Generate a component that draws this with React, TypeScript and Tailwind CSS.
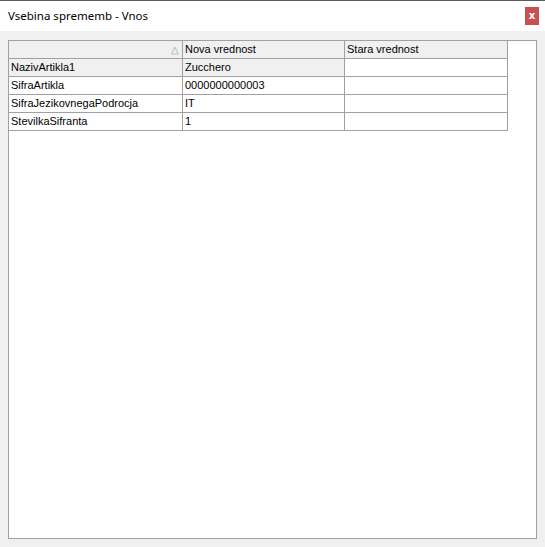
const rows = [
  { name: 'NazivArtikla1', nova: 'Zucchero', stara: '', current: true },
  { name: 'SifraArtikla', nova: '0000000000003', stara: '' },
  { name: 'SifraJezikovnegaPodrocja', nova: 'IT', stara: '' },
  { name: 'StevilkaSifranta', nova: '1', stara: '' },
];

export default function App() {
  return (
    <div className="w-[545px] h-[547px] flex flex-col bg-[#f0f0f0] border-t border-[#5a5a5a] overflow-hidden">
      {/* Title bar */}
      <div className="h-[30px] bg-white flex items-center justify-between pl-2 pr-[6px]">
        <span className="text-[11.5px] text-black font-['Noto_Sans',sans-serif]">Vsebina sprememb - Vnos</span>
        <button className="w-[14px] h-[18px] bg-[#c75050] text-white text-[10px] font-bold leading-none flex items-center justify-center font-['DejaVu_Sans',sans-serif]">
          x
        </button>
      </div>

      {/* Body */}
      <div className="flex-1 pt-[9px] px-2 pb-2">
        <div className="h-full bg-white border border-[#a0a0a0] font-['Liberation_Sans',sans-serif] text-[11px] text-black">
          {/* Header */}
          <div className="flex h-[18px]">
            <div className="w-[174px] bg-[#f0f0f0] border-r border-b border-[#a0a0a0] flex items-center justify-end pr-[3px] text-[#a0a0a0] text-[10px]">
              △
            </div>
            <div className="w-[162px] bg-[#f0f0f0] border-r border-b border-[#a0a0a0] flex items-center pl-[2px]">
              Nova vrednost
            </div>
            <div className="w-[163px] bg-[#f0f0f0] border-r border-b border-[#a0a0a0] flex items-center pl-[2px]">
              Stara vrednost
            </div>
          </div>
          {rows.map((r) => (
            <div key={r.name} className="flex h-[18px]">
              <div className={`w-[174px] border-r border-b border-[#a0a0a0] flex items-center pl-[2px] ${r.current ? 'bg-[#f0f0f0]' : ''}`}>
                {r.name}
              </div>
              <div className={`w-[162px] border-r border-b border-[#a0a0a0] flex items-center pl-[2px] ${r.current ? 'bg-[#f0f0f0]' : ''}`}>
                {r.nova}
              </div>
              <div className="w-[163px] border-r border-b border-[#a0a0a0] flex items-center pl-[2px]">
                {r.stara}
              </div>
            </div>
          ))}
        </div>
      </div>
    </div>
  );
}
